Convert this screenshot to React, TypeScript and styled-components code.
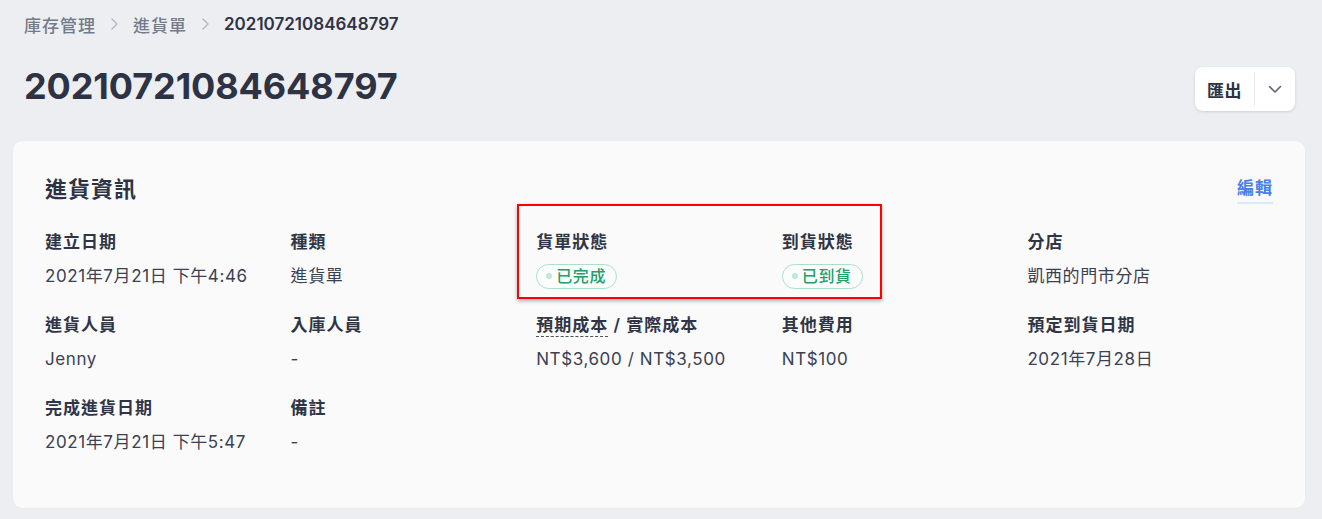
import React from "react";
import styled, { createGlobalStyle } from "styled-components";

const Global = createGlobalStyle`
  html, body { margin: 0; padding: 0; background: #edeef1; }
  body { font-family: Inter, "Noto Sans CJK TC", sans-serif; color: #2d3344; }
  * { box-sizing: border-box; }
`;

const Page = styled.div`
  width: 1322px;
  height: 519px;
  padding: 0 17px 0 13px;
  overflow: hidden;
`;

const Header = styled.header`
  padding: 12px 10px 0 11px;
`;

const Crumbs = styled.nav`
  display: flex;
  align-items: center;
  gap: 14px;
  height: 24px;
  font-size: 17px;
`;

const CrumbLink = styled.span`
  color: #737a89;
  font-weight: 500;
  letter-spacing: 1px;
`;

const CrumbCurrent = styled.span`
  color: #2d3344;
  font-weight: 600;
  font-size: 17px;
  letter-spacing: 0;
`;

const TitleRow = styled.div`
  display: flex;
  align-items: center;
  justify-content: space-between;
  margin-top: 26px;
  height: 48px;
`;

const Title = styled.h1`
  margin: 0;
  font-size: 36px;
  font-weight: 700;
  line-height: 48px;
  color: #2d3344;
  letter-spacing: -0.1px;
`;

const SplitButton = styled.div`
  display: flex;
  align-items: center;
  height: 44px;
  background: #ffffff;
  border-radius: 8px;
  box-shadow: 0 1px 3px rgba(20, 30, 50, 0.14);
  margin-top: 6px;
`;

const ButtonMain = styled.span`
  padding: 0 12px 0 12px;
  font-size: 17px;
  font-weight: 700;
  color: #2d3344;
  letter-spacing: 0.5px;
`;

const ButtonDivider = styled.span`
  width: 1px;
  height: 34px;
  background: #e6e8ec;
`;

const ButtonArrow = styled.span`
  display: flex;
  align-items: center;
  justify-content: center;
  width: 40px;
  height: 44px;
`;

const Card = styled.section`
  position: relative;
  margin-top: 31px;
  background: #fafafa;
  border-radius: 9px;
  padding: 33px 32px 53px 32px;
  box-shadow: 0 0 1px rgba(0, 0, 0, 0.08);
`;

const CardHead = styled.div`
  display: flex;
  align-items: center;
  justify-content: space-between;
  height: 30px;
`;

const CardTitle = styled.h2`
  margin: 0;
  font-size: 22px;
  font-weight: 700;
  line-height: 30px;
  letter-spacing: 1px;
  color: #2d3344;
`;

const EditLink = styled.span`
  font-size: 17px;
  font-weight: 700;
  color: #4a7fe6;
  line-height: 24px;
  padding-bottom: 2px;
  border-bottom: 2px solid #dce8fb;
  margin-top: 2px;
  letter-spacing: 1px;
`;

const Grid = styled.div`
  display: grid;
  grid-template-columns: repeat(5, 1fr);
  row-gap: 24px;
  margin-top: 26px;
`;

const Cell = styled.div`
  display: flex;
  flex-direction: column;
  gap: 9px;
`;

const Label = styled.div`
  font-size: 17px;
  font-weight: 600;
  line-height: 24px;
  color: #2f3545;
  letter-spacing: 1px;
`;

const Dashed = styled.span`
  border-bottom: 1px dashed #4a5060;
  padding-bottom: 1px;
`;

const Value = styled.div`
  font-size: 17px;
  font-weight: 400;
  line-height: 26px;
  color: #3a4152;
  letter-spacing: 0.6px;
  height: 26px;
  display: flex;
  align-items: center;
`;

const Badge = styled.span`
  display: inline-flex;
  align-items: center;
  gap: 4px;
  height: 25px;
  padding: 0 10px 0 9px;
  border: 1px solid #a9e2c9;
  border-radius: 13px;
  color: #22a068;
  font-size: 16px;
  font-weight: 500;
  letter-spacing: 0.6px;
  background: #fbfdfc;
`;

const Dot = styled.span`
  width: 6px;
  height: 6px;
  border-radius: 50%;
  background: #c8ecdb;
  border: 1px solid #b3e3cc;
`;

const Highlight = styled.div`
  position: absolute;
  left: 504px;
  top: 63px;
  width: 365px;
  height: 95px;
  border: 2px solid #ff0000;
  box-shadow: 0 2px 4px rgba(0, 0, 0, 0.3);
  pointer-events: none;
`;

const Chevron = () => (
  <svg width="9" height="14" viewBox="0 0 9 14" fill="none">
    <path d="M2 2l5 5-5 5" stroke="#b3b8c3" strokeWidth="1.4" strokeLinecap="round" strokeLinejoin="round" />
  </svg>
);

const ChevronDown = () => (
  <svg width="14" height="9" viewBox="0 0 14 9" fill="none">
    <path d="M1.5 1.5l5.5 5.5 5.5-5.5" stroke="#5a6275" strokeWidth="1.6" strokeLinecap="round" strokeLinejoin="round" />
  </svg>
);

type Item = { label: React.ReactNode; value: React.ReactNode };

const items: Item[] = [
  { label: "建立日期", value: "2021年7月21日 下午4:46" },
  { label: "種類", value: "進貨單" },
  { label: "貨單狀態", value: <Badge><Dot />已完成</Badge> },
  { label: "到貨狀態", value: <Badge><Dot />已到貨</Badge> },
  { label: "分店", value: "凱西的門市分店" },
  { label: "進貨人員", value: "Jenny" },
  { label: "入庫人員", value: "-" },
  { label: <><Dashed>預期成本</Dashed> / 實際成本</>, value: "NT$3,600 / NT$3,500" },
  { label: "其他費用", value: "NT$100" },
  { label: "預定到貨日期", value: "2021年7月28日" },
  { label: "完成進貨日期", value: "2021年7月21日 下午5:47" },
  { label: "備註", value: "-" },
];

export default function App() {
  return (
    <Page>
      <Global />
      <Header>
        <Crumbs>
          <CrumbLink>庫存管理</CrumbLink>
          <Chevron />
          <CrumbLink>進貨單</CrumbLink>
          <Chevron />
          <CrumbCurrent>20210721084648797</CrumbCurrent>
        </Crumbs>
        <TitleRow>
          <Title>20210721084648797</Title>
          <SplitButton>
            <ButtonMain>匯出</ButtonMain>
            <ButtonDivider />
            <ButtonArrow><ChevronDown /></ButtonArrow>
          </SplitButton>
        </TitleRow>
      </Header>
      <Card>
        <CardHead>
          <CardTitle>進貨資訊</CardTitle>
          <EditLink>編輯</EditLink>
        </CardHead>
        <Grid>
          {items.map((it, i) => (
            <Cell key={i}>
              <Label>{it.label}</Label>
              <Value>{it.value}</Value>
            </Cell>
          ))}
        </Grid>
        <Highlight />
      </Card>
    </Page>
  );
}
